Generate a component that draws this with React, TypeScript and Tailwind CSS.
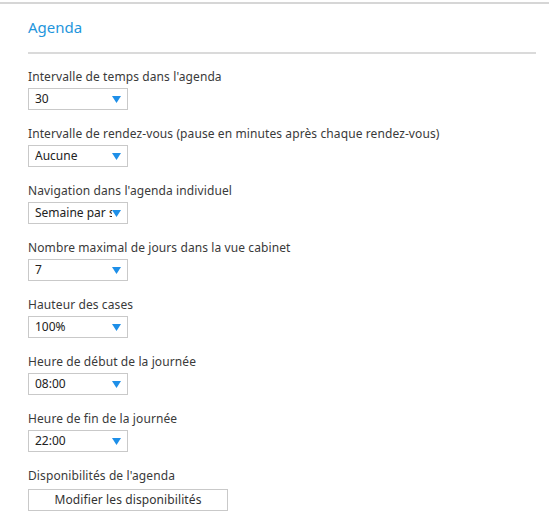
const fields = [
  { label: "Intervalle de temps dans l'agenda", value: "30" },
  {
    label: "Intervalle de rendez-vous (pause en minutes après chaque rendez-vous)",
    value: "Aucune",
  },
  { label: "Navigation dans l'agenda individuel", value: "Semaine par semaine" },
  { label: "Nombre maximal de jours dans la vue cabinet", value: "7" },
  { label: "Hauteur des cases", value: "100%" },
  { label: "Heure de début de la journée", value: "08:00" },
  { label: "Heure de fin de la journée", value: "22:00" },
];

const Arrow = () => (
  <svg width="9" height="7" viewBox="0 0 9 7" className="shrink-0">
    <path d="M0 0h9L4.5 7z" fill="#1e8fe8" />
  </svg>
);

function Select({ value }: { value: string }) {
  return (
    <div className="flex h-[22px] w-[100px] items-center border border-[#c9c9c9] bg-white pl-[6px] pr-[6px]">
      <span className="min-w-0 flex-1 overflow-hidden whitespace-nowrap text-[12px] text-[#222]">
        {value}
      </span>
      <Arrow />
    </div>
  );
}

export default function App() {
  return (
    <div className="h-[515px] w-[550px] bg-white font-['Noto_Sans',sans-serif] text-[#333]">
      <div className="pt-[2px]">
        <div className="h-[2px] w-[549px] bg-[#d6d6d6]" />
      </div>
      <div className="px-[28px]">
        <h2 className="mt-[13px] text-[15px] leading-[20px] text-[#1f96dc]">Agenda</h2>
        <div className="mt-[15px] h-[2px] w-[508px] bg-[#dadada]" />
        <div className="mt-[15px] flex flex-col gap-[16px]">
          {fields.map((f) => (
            <div key={f.label}>
              <p className="mb-[3px] text-[12px] leading-[16px] tracking-[0.1px] text-[#3a3a3a]">
                {f.label}
              </p>
              <Select value={f.value} />
            </div>
          ))}
          <div>
            <p className="mb-[2px] text-[12px] leading-[16px] tracking-[0.1px] text-[#3a3a3a]">
              Disponibilités de l'agenda
            </p>
            <button className="h-[22px] w-[200px] border border-[#c9c9c9] bg-white text-[12px] leading-[20px] tracking-[0.1px] text-[#333]">
              Modifier les disponibilités
            </button>
          </div>
        </div>
      </div>
    </div>
  );
}
